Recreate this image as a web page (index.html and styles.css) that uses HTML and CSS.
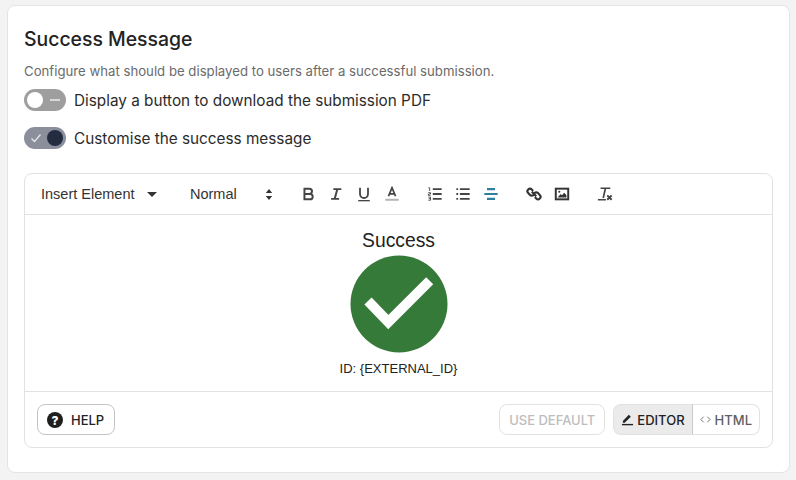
FILE: index.html
```html
<!DOCTYPE html>
<html lang="en">
<head>
    <meta charset="UTF-8">
    <title>Success Message</title>
    <link rel="stylesheet" href="styles.css">
</head>
<body>
    <section class="card">
        <h2 class="card-title">Success Message</h2>
        <p class="card-desc">Configure what should be displayed to users after a successful submission.</p>

        <div class="toggle-row">
            <span class="toggle">
                <span class="knob"></span>
                <span class="dash"></span>
            </span>
            <span class="toggle-label">Display a button to download the submission PDF</span>
        </div>
        <div class="toggle-row second">
            <span class="toggle on">
                <svg class="tick" viewBox="0 0 12 12" width="12" height="12"><path d="M1.5 6.500l3 3 6-7" fill="none" stroke="#e8e8ec" stroke-width="1.200"/></svg>
                <span class="knob"></span>
            </span>
            <span class="toggle-label">Customise the success message</span>
        </div>

        <div class="editor">
            <div class="toolbar">
                <span class="picker insert">Insert Element<svg class="caret" viewBox="0 0 10 5" width="10" height="5"><path d="M0 0h10L5 5z" fill="#333"/></svg></span>
                <span class="picker format">Normal<svg class="updown" viewBox="0 0 8 11" width="8" height="11"><path d="M4 0l3.200 4H.8zM4 11L.8 7h6.400z" fill="#333"/></svg></span>

                <span class="group marks">
                    <svg class="tool" viewBox="0 0 18 18"><path d="M5 3h5.500a3 3 0 0 1 0 6H5zM5 9h6.300a3 3 0 0 1 0 6H5z" fill="none" stroke="#444" stroke-width="2.200"/></svg>
                    <svg class="tool" viewBox="0 0 18 18"><path d="M6 3.500h9M3.500 14.500h9M10.500 3.500l-3 11" fill="none" stroke="#444" stroke-width="2.200"/></svg>
                    <svg class="tool" viewBox="0 0 18 18"><path d="M4.500 2v7a4.500 4.500 0 0 0 9 0V2" fill="none" stroke="#444" stroke-width="2"/><path d="M2.500 16.500h13" stroke="#444" stroke-width="1.500"/></svg>
                    <svg class="tool" viewBox="0 0 18 18"><path d="M5 11.500L9 2l4 9.500M6.300 8.800h5.400" fill="none" stroke="#444" stroke-width="2"/><path d="M1.500 15.500h15" stroke="#b3b3b3" stroke-width="2.200"/></svg>
                </span>

                <span class="group lists">
                    <svg class="tool" viewBox="0 0 18 18"><path d="M6.500 3.500h10M6.500 9h10M6.500 14.500h10" stroke="#444" stroke-width="2.200"/><path d="M1.500 2h1.500v3.500M1.500 7.500h2.500v1.500H1.500v1.500h2.500M1.500 12.500h2.500v3.500H1.500M2 14.200h2" fill="none" stroke="#444" stroke-width="1"/></svg>
                    <svg class="tool" viewBox="0 0 18 18"><path d="M5.500 3.500h11M5.500 9h11M5.500 14.500h11M1.500 3.500h2M1.500 9h2M1.500 14.500h2" stroke="#444" stroke-width="2.200"/></svg>
                    <svg class="tool" viewBox="0 0 18 18"><path d="M4.500 3.500h9M1.500 9h15M4.500 14.500h9" stroke="#2f7f9e" stroke-width="2.400"/></svg>
                </span>

                <span class="group media">
                    <svg class="tool" viewBox="0 0 18 18"><path d="M8 5.500L6.500 4a2.800 2.800 0 0 0-4 4l2 2a2.800 2.800 0 0 0 4 0M10 12.500l1.500 1.500a2.800 2.800 0 0 0 4-4l-2-2a2.800 2.800 0 0 0-4 0M6.500 6.500l5 5" fill="none" stroke="#333" stroke-width="2.400"/></svg>
                    <svg class="tool" viewBox="0 0 18 18"><rect x="2" y="3" width="14" height="12" fill="none" stroke="#333" stroke-width="2.200"/><path d="M4 13l3.500-4 1.500 1.500 2.500-3 2.500 3V13z" fill="#333"/><circle cx="6" cy="6.500" r="1.200" fill="#333"/></svg>
                </span>

                <span class="group clean">
                    <svg class="tool" viewBox="0 0 18 18"><path d="M4 2.500h11M9.500 2.500l-2.500 11M1 15.500h9" fill="none" stroke="#444" stroke-width="1.900"/><path d="M11.500 10.500l5 5M16.500 10.500l-5 5" stroke="#444" stroke-width="2.200"/></svg>
                </span>
            </div>

            <div class="content">
                <div class="success-title">Success</div>
                <svg class="success-icon" viewBox="0 0 98 98" width="98" height="98">
                    <circle cx="49" cy="49" r="48.500" fill="#357a38"/>
                    <path d="M18 46l20.300 21L79.700 25.700" fill="none" stroke="#fff" stroke-width="10"/>
                </svg>
                <div class="success-id">ID: {EXTERNAL_ID}</div>
            </div>

            <div class="editor-footer">
                <button class="btn help">
                    <svg viewBox="0 0 16 16" width="16" height="16"><circle cx="8" cy="8" r="8" fill="#1f1f1f"/><text x="8" y="12.500" text-anchor="middle" class="help-mark">?</text></svg>
                    HELP
                </button>
                <div class="footer-right">
                    <button class="btn default" disabled>USE DEFAULT</button>
                    <div class="switcher">
                        <button class="btn active">
                            <svg viewBox="0 0 14 14" width="13" height="13"><path d="M1 12.500h12" stroke="#222" stroke-width="1.500"/><path d="M2 10.500V8.500L8.500 2l2 2L4 10.500z" fill="#222"/></svg>
                            EDITOR
                        </button>
                        <button class="btn html">
                            <svg viewBox="0 0 12 12" width="11" height="11"><path d="M4 3L1 6l3 3M8 3l3 3-3 3" fill="none" stroke="#666" stroke-width="1"/></svg>
                            HTML
                        </button>
                    </div>
                </div>
            </div>
        </div>
    </section>
</body>
</html>
```

FILE: styles.css
```css
html, body {
    height: 100%;
}
body {
    font-family: Inter, "Liberation Sans", sans-serif;
    margin: 0;
    padding: 5px 6px 7px 7px;
    box-sizing: border-box;
    background-color: #f3f3f3;
    color: #222;
}
.card {
    background: #fff;
    border: 1px solid #e4e4e4;
    border-radius: 8px;
    padding: 20px 16px 24px;
    height: 468px;
    box-sizing: border-box;
}
.card-title {
    margin: 0;
    font-size: 19.400px;
    line-height: 26px;
    font-weight: 500;
    color: #222;
}
.card-desc {
    margin: 10px 0 0;
    font-size: 13.200px;
    line-height: 18px;
    color: #6b6b6b;
}
.toggle-row {
    display: flex;
    align-items: center;
    gap: 8px;
    margin-top: 9px;
    height: 22px;
}
.toggle-row.second {
    margin-top: 16px;
}
.toggle-label {
    font-size: 15.300px;
    color: #2b2b2b;
}
.toggle {
    display: flex;
    align-items: center;
    justify-content: space-between;
    width: 42px;
    height: 22px;
    box-sizing: border-box;
    padding: 0 3px;
    border-radius: 11px;
    background: #9e9e9e;
}
.toggle .knob {
    width: 16px;
    height: 16px;
    border-radius: 50%;
    background: #fff;
}
.toggle .dash {
    width: 10px;
    height: 2px;
    margin-right: 3px;
    background: #d8d8d8;
}
.toggle.on {
    background: #8b8f9c;
}
.toggle.on .knob {
    background: #232c40;
}
.tick {
    margin-left: 3px;
}
.editor {
    margin-top: 24px;
    border: 1px solid #e2e2e2;
    border-radius: 8px;
}
.toolbar {
    display: flex;
    align-items: center;
    height: 40px;
    padding-left: 16px;
    border-bottom: 1px solid #e2e2e2;
}
.picker {
    display: flex;
    align-items: center;
    justify-content: space-between;
    font-family: "Liberation Sans", sans-serif;
    font-size: 14.500px;
    color: #333;
}
.insert {
    width: 116px;
}
.format {
    width: 83px;
    margin-left: 33px;
}
.group {
    display: flex;
    align-items: center;
}
.tool {
    width: 16px;
    height: 16px;
}
.marks {
    gap: 12px;
    margin-left: 27px;
}
.lists {
    gap: 12px;
    margin-left: 27px;
}
.media {
    gap: 12px;
    margin-left: 27px;
}
.clean {
    margin-left: 27px;
}
.content {
    display: flex;
    flex-direction: column;
    align-items: center;
    height: 177px;
    padding-top: 14px;
    box-sizing: border-box;
    font-family: "Liberation Sans", sans-serif;
    border-bottom: 1px solid #e2e2e2;
}
.success-title {
    font-size: 19.300px;
    line-height: 24px;
    color: #222;
}
.success-icon {
    margin-top: 2px;
}
.success-id {
    margin-top: 8px;
    font-size: 13px;
    line-height: 16px;
    color: #222;
}
.editor-footer {
    display: flex;
    justify-content: space-between;
    align-items: center;
    padding: 12px;
    height: 55px;
    box-sizing: border-box;
}
.footer-right {
    display: flex;
    gap: 8px;
}
.btn {
    display: flex;
    align-items: center;
    height: 31px;
    padding: 0 9px;
    gap: 8px;
    background: #fff;
    border: 1px solid #e2e2e2;
    border-radius: 8px;
    font-family: Inter, "Liberation Sans", sans-serif;
    font-size: 13px;
    font-weight: 500;
    color: #222;
}
.help {
    padding-right: 10px;
    border-color: #c4c4c4;
}
.help-mark {
    font-size: 12px;
    font-weight: 800;
    fill: #fff;
}
.default {
    color: #bdbdbd;
    font-weight: 500;
}
.switcher {
    display: flex;
}
.switcher .btn {
    gap: 3px;
    padding: 0 7px;
}
.active {
    background: #ebebeb;
    border-radius: 8px 0 0 8px;
    border-right-color: #c9c9c9;
}
.switcher .html {
    gap: 4px;
    border-left: none;
    border-radius: 0 8px 8px 0;
    color: #5f5f5f;
}
```
